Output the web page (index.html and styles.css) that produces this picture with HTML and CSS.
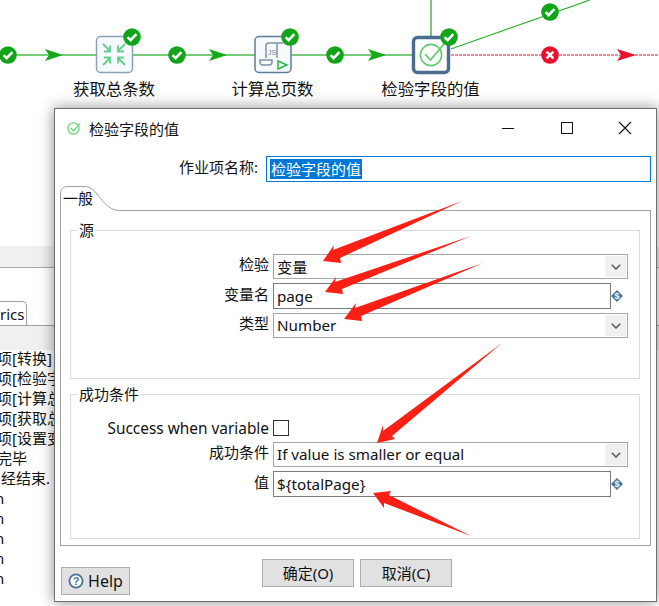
FILE: index.html
```html
<!DOCTYPE html>
<html lang="zh">
<head>
  <meta charset="utf-8">
  <title>检验字段的值</title>
  <link rel="stylesheet" href="styles.css">
</head>
<body>
  <svg width="0" height="0" class="defs">
    <symbol id="ok" viewBox="-9 -9 18 18">
      <circle r="8.8" fill="#12a51a"/>
      <path d="M-4.4 0.2 L-1.4 3.2 L4.4 -2.8" fill="none" stroke="#fff" stroke-width="2.6"/>
    </symbol>
    <symbol id="chevron" viewBox="0 0 10 6">
      <path d="M0.8 0.8 L5 5 L9.2 0.8" fill="none" stroke="#555" stroke-width="1.5"/>
    </symbol>
    <symbol id="var" viewBox="0 0 12 12">
      <path d="M6 0 L12 6 L6 12 L0 6 Z" fill="#4a7396"/>
      <text x="6" y="9" class="var-glyph">$</text>
    </symbol>
  </svg>

  <div class="workspace">
    <!-- job canvas -->
    <svg class="canvas" width="659" height="246">
      <g fill="none">
        <path d="M8 55 H96 M133 55 H255 M291 55 H412" stroke="#4cba4c" stroke-width="1.6"/>
        <path d="M431 0 V36" stroke="#2a9c2a" stroke-width="1.2"/>
        <path d="M451 49 L590 0" stroke="#2fae2f" stroke-width="1.2"/>
        <path d="M451 55 H659" stroke="#e8112d" stroke-width="1.2" stroke-dasharray="3 1"/>
      </g>
      <path d="M45 49 L63 55 L45 61 L49 55 Z M209 49 L227 55 L209 61 L213 55 Z M368 49 L386 55 L368 61 L372 55 Z" fill="#16ab16"/>
      <path d="M617 49 L636 55 L617 61 L621 55 Z" fill="#ea1430"/>

      <rect x="96.5" y="36.5" width="36" height="36" rx="4" fill="#f6fafc" stroke="#8ba2b6" stroke-width="1.5"/>
      <path d="M103 44 L110 51 M110 45.5 V51.5 H104 M125 44 L118 51 M118 45.5 V51.5 H124 M103 65 L110 58 M110 63.5 V57.5 H104 M125 65 L118 58 M118 63.5 V57.5 H124" fill="none" stroke="#62cf8a" stroke-width="1.8"/>

      <rect x="255" y="36.5" width="36" height="36" rx="4" fill="#f6fafc" stroke="#5b7d9b" stroke-width="1.5"/>
      <path d="M266 58 V46 Q266 43 269 43 H283 M277 43 V58 M260 60 H272 V62 Q272 65 269 65 H263 Q260 65 260 62 Z" fill="none" stroke="#7d93a8" stroke-width="1.5"/>
      <text x="272" y="55" class="js-glyph">JS</text>
      <path d="M278 61 L287 65 L278 69 Z" fill="#eafaf0" stroke="#29b84a" stroke-width="1.5"/>

      <rect x="413.5" y="37.5" width="35" height="35" rx="4" fill="#fff" stroke="#4a6d8f" stroke-width="3.4"/>
      <circle cx="431" cy="55" r="10.6" fill="none" stroke="#5fcb6c" stroke-width="1.6"/>
      <path d="M425 54 L430.5 60 L444 44" fill="none" stroke="#5fcb6c" stroke-width="1.8"/>

      <use href="#ok" x="-1" y="46" width="18" height="18"/>
      <use href="#ok" x="168" y="46" width="18" height="18"/>
      <use href="#ok" x="326" y="46" width="18" height="18"/>
      <use href="#ok" x="123" y="28" width="18" height="18"/>
      <use href="#ok" x="281" y="28" width="18" height="18"/>
      <use href="#ok" x="440" y="28" width="18" height="18"/>
      <use href="#ok" x="541" y="3" width="18" height="18"/>
      <circle cx="550" cy="55" r="8.8" fill="#e8112d"/>
      <path d="M546.6 51.6 L553.4 58.4 M553.4 51.6 L546.6 58.4" stroke="#fff" stroke-width="2.6"/>

      <text x="114" y="95" class="node-label">获取总条数</text>
      <text x="272.5" y="95" class="node-label">计算总页数</text>
      <text x="430.5" y="95" class="node-label">检验字段的值</text>
    </svg>

    <!-- bottom panel behind the dialog -->
    <div class="panel-bar"></div>
    <div class="panel-tabs"><span class="panel-tab">rics</span></div>
    <div class="panel-toolbar"></div>
    <div class="log">
      <div class="log-line">项[转换]</div>
      <div class="log-line">项[检验字</div>
      <div class="log-line">项[计算总</div>
      <div class="log-line">项[获取总</div>
      <div class="log-line">项[设置变</div>
      <div class="log-line">完毕</div>
      <div class="log-line log-end">经结束.</div>
      <div class="log-line log-cut">n</div>
      <div class="log-line log-cut">n</div>
      <div class="log-line log-cut">n</div>
      <div class="log-line log-cut">n</div>
      <div class="log-line log-cut">n</div>
    </div>
  </div>

  <div class="dialog">
    <div class="titlebar">
      <svg class="title-icon" width="14" height="14" viewBox="0 0 14 14">
        <circle cx="6.5" cy="7.5" r="5.6" fill="none" stroke="#6ccf7a" stroke-width="1.2"/>
        <path d="M3.6 7 L6.4 10 L13 2.6" fill="none" stroke="#6ccf7a" stroke-width="1.3"/>
      </svg>
      <span class="title-text">检验字段的值</span>
      <span class="win-min"></span>
      <span class="win-max"></span>
      <svg class="win-close" width="14" height="14" viewBox="0 0 14 14">
        <path d="M1 1 L13 13 M13 1 L1 13" stroke="#111" stroke-width="1.1"/>
      </svg>
    </div>

    <div class="name-row">
      <label class="name-label">作业项名称:</label>
      <div class="name-input"><span class="selected">检验字段的值</span></div>
    </div>

    <div class="folder">
      <div class="tabs">
        <svg class="tab" width="62" height="25">
          <path d="M0.5 25 V8 Q0.5 0.5 8 0.5 H25 C38 0.5 42 24.5 60 24.5 H62" fill="#fff" stroke="#a0a0a0"/>
          <text x="3" y="18" class="tab-text">一般</text>
        </svg>
        <div class="tabs-rest"></div>
      </div>
      <div class="folder-body">
        <fieldset class="group group-source">
          <legend>源</legend>
          <div class="field">
            <label>检验</label>
            <div class="select"><span class="select-text">变量</span><span class="select-btn"><svg width="10" height="6"><use href="#chevron"/></svg></span></div>
          </div>
          <div class="field">
            <label>变量名</label>
            <div class="var-input">
              <div class="input">page</div>
              <svg class="var-icon" width="12" height="12"><use href="#var"/></svg>
            </div>
          </div>
          <div class="field">
            <label>类型</label>
            <div class="select"><span class="select-text">Number</span><span class="select-btn"><svg width="10" height="6"><use href="#chevron"/></svg></span></div>
          </div>
        </fieldset>

        <fieldset class="group group-cond">
          <legend>成功条件</legend>
          <div class="field field-check">
            <label>Success when variable</label>
            <span class="checkbox"></span>
          </div>
          <div class="field">
            <label>成功条件</label>
            <div class="select"><span class="select-text">If value is smaller or equal</span><span class="select-btn"><svg width="10" height="6"><use href="#chevron"/></svg></span></div>
          </div>
          <div class="field">
            <label>值</label>
            <div class="var-input">
              <div class="input">${totalPage}</div>
              <svg class="var-icon" width="12" height="12"><use href="#var"/></svg>
            </div>
          </div>
        </fieldset>
      </div>
    </div>

    <div class="footer">
      <button class="btn btn-help">
        <svg width="16" height="16" viewBox="0 0 16 16">
          <circle cx="8" cy="8" r="6.6" fill="#fff" stroke="#4a7396" stroke-width="1.8"/>
          <text x="8" y="12" class="help-glyph">?</text>
        </svg>
        Help
      </button>
      <button class="btn btn-ok">确定(O)</button>
      <button class="btn btn-cancel">取消(C)</button>
    </div>
  </div>

  <!-- red annotation arrows drawn on top of the screenshot -->
  <svg class="arrows" width="659" height="606">
    <g fill="#fb1f14">
      <path d="M462 201 L333 250 L334 245 L323 261 L341 263 L340 258 Z"/>
      <path d="M471 236 L335 282 L336 277 L325 292 L343 294 L342 289 Z"/>
      <path d="M483 263 L355 308 L356 303 L344 319 L362 321 L361 316 Z"/>
      <path d="M502 343 L383 431 L383 425 L377 443 L395 439 L392 436 Z"/>
      <path d="M471 536 L389 495 L391 491 L373 493 L384 508 L384 503 Z"/>
    </g>
  </svg>
</body>
</html>
```

FILE: styles.css
```css
html, body { margin: 0; padding: 0; }
body {
  width: 659px;
  height: 606px;
  overflow: hidden;
  position: relative;
  background: #fff;
  font-family: "Noto Sans", "Noto Sans CJK SC", sans-serif;
  font-size: 15px;
  color: #111;
}
.defs { position: absolute; }
.canvas { display: block; }
.node-label {
  font-size: 16.4px;
  text-anchor: middle;
  fill: #111;
}
.js-glyph { font-size: 7px; fill: #6a859c; text-anchor: middle; font-family: "Liberation Sans", sans-serif; }
.var-glyph { font-size: 9px; font-weight: bold; fill: #fff; text-anchor: middle; font-family: "Liberation Sans", sans-serif; }
.help-glyph { font-size: 11px; font-weight: bold; fill: #4a7396; text-anchor: middle; font-family: "Liberation Sans", sans-serif; }

/* panel behind the dialog */
.panel-bar { height: 21px; background: #f0f0f0; border-bottom: 1px solid #aaa; }
.panel-tabs { height: 58px; border-bottom: 1px solid #a0a0a0; display: flex; align-items: flex-end; box-sizing: border-box; }
.panel-tab {
  width: 27px;
  height: 24px;
  box-sizing: border-box;
  border: 1px solid #a0a0a0;
  border-left: 0;
  border-bottom: 0;
  border-top-right-radius: 5px;
  text-align: right;
  padding-right: 3px;
  font-size: 15px;
  line-height: 25px;
  overflow: hidden;
}
.panel-toolbar { height: 24px; background: #f0f0f0; }
.log { width: 54px; margin-top: -2px; overflow: hidden; }
.log-line { height: 20px; line-height: 20px; font-size: 15px; margin-left: -3px; white-space: nowrap; }
.log-end { margin-left: 1px; }
.log-cut { margin-left: -5px; }

/* dialog */
.dialog {
  position: absolute;
  left: 54px;
  top: 108px;
  width: 603px;
  height: 494px;
  box-sizing: border-box;
  background: #fff;
  border: 1px solid #6f6f6f;
  box-shadow: 0 0 14px rgba(0, 0, 0, .45);
}
.titlebar { height: 38px; display: flex; align-items: center; }
.title-icon { margin-left: 12px; }
.title-text { margin-left: 8px; flex: 1; }
.win-min { width: 12px; height: 1px; background: #111; }
.win-max { width: 10px; height: 10px; border: 1px solid #111; margin-left: 47px; }
.win-close { margin-left: 45px; margin-right: 24px; }

.name-row { display: flex; align-items: center; height: 26px; margin-top: 9px; }
.name-label { width: 203px; text-align: right; margin-top: -5px; }
.name-input {
  margin-left: 8px;
  width: 385px;
  height: 26px;
  box-sizing: border-box;
  border: 1.5px solid #0078d7;
  padding: 2px 3px;
  display: flex;
}
.selected { background: #0078d7; color: #fff; line-height: 20px; padding: 0 1px; }

.folder { margin: 4px 0 0 5px; width: 591px; }
.tabs { display: flex; height: 25px; }
.tab { display: block; flex: none; }
.tab-text { font-size: 15px; fill: #111; }
.tabs-rest { flex: 1; border-bottom: 1px solid #a0a0a0; }
.folder-body {
  height: 335px;
  box-sizing: border-box;
  border: 1px solid #a0a0a0;
  border-top: 0;
  padding: 9px 10px 0 9px;
}
.group {
  margin: 0;
  padding: 0;
  min-width: 0;
  box-sizing: border-box;
  border: 1px solid #dcdcdc;
}
.group legend { padding: 0 1px; margin-left: 7px; line-height: 20px; font-size: 15px; }
.group-source { height: 159px; padding-top: 14px; }
.group-cond { height: 155px; margin-top: 5px; padding-top: 16px; }

.field { display: flex; align-items: center; margin-bottom: 4px; }
.field label { width: 198px; flex: none; text-align: right; margin-right: 4px; margin-top: -6px; }
.field-check { margin-bottom: 6px; height: 16px; }
.field-check label { margin-top: 0; font-size: 15.4px; }

.select {
  width: 355px;
  height: 25px;
  box-sizing: border-box;
  border: 1px solid #a6a6a6;
  display: flex;
  align-items: center;
  justify-content: space-between;
  padding: 1px 1px 1px 3px;
}
.select-text { font-size: 15.2px; margin-top: -2px; }
.select-btn {
  width: 21px;
  height: 21px;
  background: #f0f0f0;
  display: flex;
  align-items: center;
  justify-content: center;
}
.select-btn svg { display: block; }
.var-input { display: flex; align-items: center; }
.input {
  width: 338px;
  height: 26px;
  line-height: 24px;
  font-size: 15.2px;
  box-sizing: border-box;
  border: 1px solid #7a7a7a;
  padding-left: 3px;
}
.var-icon { display: block; }
.checkbox { width: 16px; height: 16px; box-sizing: border-box; border: 1px solid #333; }

.footer { display: flex; padding: 13px 0 0 6px; }
.btn {
  font: inherit;
  color: #111;
  background: #e1e1e1;
  border: 1px solid #adadad;
  height: 28px;
  padding: 0 0 2px;
  box-sizing: border-box;
  display: flex;
  align-items: center;
  justify-content: center;
}
.btn-help { width: 69px; margin-top: 8px; gap: 4px; font-size: 16px; padding: 0; }
.btn-ok { width: 92px; margin-left: 132px; }
.btn-cancel { width: 92px; margin-left: 6px; }

.arrows { position: absolute; left: 0; top: 0; }
```
